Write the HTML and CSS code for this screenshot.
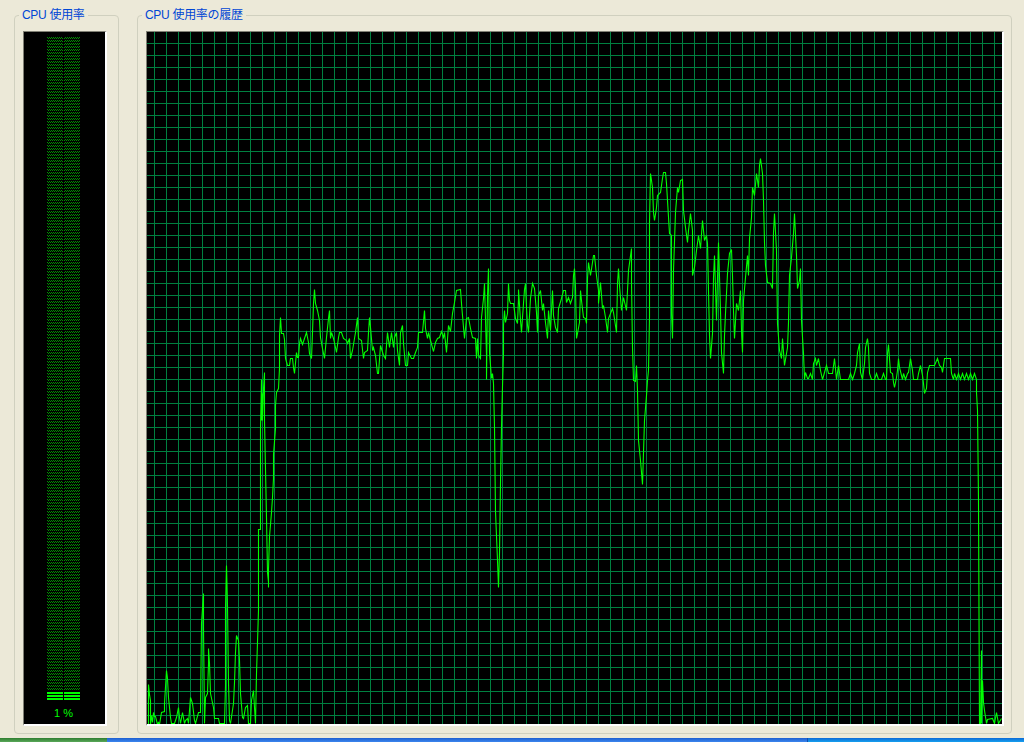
FILE: index.html
```html
<!DOCTYPE html>
<html lang="ja">
<head>
    <meta charset="UTF-8">
    <meta name="viewport" content="width=device-width, initial-scale=1.0">
    <title>Windows タスク マネージャ</title>
    <link rel="stylesheet" href="styles.css">
</head>
<body>
    <div class="panels">
        <!-- CPU 使用率 -->
        <fieldset class="group group-usage">
            <legend class="group-title">CPU 使用率</legend>
            <div class="screen meter">
                <svg class="meter-bars" width="33" height="664" viewBox="0 0 33 664">
                    <defs>
                        <pattern id="dim-dots" width="2" height="3" patternUnits="userSpaceOnUse">
                            <rect x="0" y="0" width="1" height="1" class="dim-dot"></rect>
                            <rect x="1" y="1" width="1" height="1" class="dim-dot"></rect>
                        </pattern>
                        <pattern id="lit-rows" y="1" width="33" height="3" patternUnits="userSpaceOnUse">
                            <rect x="0" y="0" width="33" height="2" class="lit-row"></rect>
                        </pattern>
                    </defs>
                    <rect x="0" y="0" width="16" height="654" fill="url(#dim-dots)"></rect>
                    <rect x="17" y="0" width="16" height="654" fill="url(#dim-dots)"></rect>
                    <rect x="0" y="655" width="16" height="8" fill="url(#lit-rows)"></rect>
                    <rect x="17" y="655" width="16" height="8" fill="url(#lit-rows)"></rect>
                </svg>
                <div class="meter-value">1 %</div>
            </div>
        </fieldset>

        <!-- CPU 使用率の履歴 -->
        <fieldset class="group group-history">
            <legend class="group-title">CPU 使用率の履歴</legend>
            <div class="screen graph">
                <svg class="graph-line" width="855" height="692" viewBox="146.5 31.5 855 692">
                    <polyline points="148,724 148,684 149,694 150,700 150,724 151,715 152,722 153,712 154,716 155,716 156,720 157,724 158,722 159,724 160,718 161,712 164,711 164,703 166,670 167,678 168,697 169,707 170,717 171,723 174,723 176,717 178,707 179,717 180,723 182,712 184,723 185,720 187,718 188,723 190,697 192,703 194,720 195,723 198,712 200,712 201,623 203,593 203,627 204,723 205,697 207,693 208,663 208,648 209,663 210,693 213,707 214,718 218,718 219,723 224,723 225,685 225,607 226,565 227,605 228,682 229,720 230,723 233,703 234,682 235,652 236,635 238,640 239,660 240,693 242,717 243,718 245,707 247,705 248,723 250,723 251,700 253,690 254,707 255,723 256,673 258,610 258,529 260,529 260,428 261,379 261,420 262,393 262,420 263,388 264,372 264,420 266,517 267,572 268,582 268,587 268,569 269,536 271,512 272,497 273,478 273,454 275,428 275,405 276,392 278,388 279,368 279,335 280,317 281,333 283,333 284,339 285,358 287,365 289,365 290,358 292,358 293,367 294,373 296,352 297,357 298,357 299,343 300,338 302,344 304,338 306,332 308,342 309,353 311,358 312,332 313,303 314,289 315,303 317,310 319,320 320,337 322,348 324,358 326,337 328,318 329,310 330,338 331,332 333,338 335,347 336,352 338,337 339,332 341,332 343,338 346,340 347,343 349,338 350,358 352,350 354,338 355,332 357,317 358,338 361,340 363,358 364,352 367,350 368,332 369,317 370,327 372,350 373,347 375,355 377,373 378,373 380,345 383,355 385,358 387,332 389,347 391,332 393,347 394,337 396,332 397,350 399,365 400,332 402,325 403,343 405,365 407,365 408,352 411,358 413,358 415,352 417,347 418,332 422,332 424,310 425,328 427,338 428,332 430,340 433,351 435,342 437,338 439,337 441,331 443,337 444,332 446,352 448,325 450,331 452,313 454,302 456,290 460,289 461,303 463,327 464,338 466,318 468,317 470,328 472,337 475,338 476,358 477,338 478,355 480,358 481,317 483,298 484,283 486,355 486,379 487,295 488,268 489,352 491,378 492,373 493,383 494,427 495,511 497,560 498,587 499,552 500,483 501,427 502,386 503,352 503,325 504,310 505,322 507,313 508,283 509,300 510,303 513,303 515,318 517,323 518,298 518,289 520,320 521,332 522,317 523,303 524,289 525,283 526,307 527,325 528,332 530,298 532,283 534,288 536,312 537,332 538,295 540,290 542,310 543,303 545,322 547,338 548,310 550,330 552,290 553,315 555,327 557,332 558,308 561,298 563,290 565,290 566,302 568,297 570,303 572,297 573,275 574,268 575,287 576,338 577,333 579,322 580,290 581,300 583,317 585,318 586,323 587,278 588,262 590,275 592,262 593,255 594,255 596,275 598,290 598,303 600,282 602,308 603,305 605,317 607,332 608,318 612,308 613,312 616,332 617,283 618,268 619,285 621,310 623,297 626,310 628,270 631,248 631,282 632,347 633,380 635,381 636,365 637,390 638,440 640,460 642,484 644,420 646,395 647,380 648,370 649,317 649,222 650,173 652,187 653,212 654,220 656,207 657,195 660,192 662,178 663,172 665,172 666,183 667,200 669,233 671,235 671,313 672,338 673,270 675,212 677,187 678,192 680,180 682,179 683,210 685,227 687,242 688,230 690,213 692,230 692,275 694,267 696,250 698,235 700,248 702,220 704,240 706,235 707,243 708,290 709,335 710,358 712,333 713,277 714,255 716,320 717,277 718,242 720,310 721,352 723,373 724,335 725,313 727,273 729,253 731,249 732,275 733,310 734,338 736,303 738,310 740,290 741,330 742,352 743,300 745,277 747,255 748,275 749,238 751,217 752,187 754,195 756,173 758,187 759,165 760,158 762,173 763,200 764,242 765,265 767,282 770,283 772,288 773,232 774,213 776,250 777,323 779,350 781,358 782,338 784,365 787,347 788,322 789,275 791,257 793,233 794,213 796,255 797,288 799,280 800,268 801,320 803,353 804,379 805,372 807,378 808,378 810,373 812,379 813,363 815,358 816,365 818,358 820,370 822,379 824,372 826,365 828,373 832,373 834,358 836,379 838,365 840,379 848,379 850,373 852,379 854,373 856,365 857,352 859,343 860,372 862,379 864,363 865,347 867,338 868,347 869,373 871,379 874,379 876,373 878,379 881,379 883,373 885,379 886,379 887,353 888,344 890,372 892,373 893,382 894,387 896,377 897,370 898,358 899,367 902,379 903,373 905,379 907,373 908,372 910,358 912,370 913,379 917,379 918,373 920,365 922,375 923,383 924,393 926,388 927,372 929,365 934,365 937,358 939,365 941,367 942,372 944,358 950,358 951,373 953,379 954,373 956,379 958,373 960,379 962,373 964,379 966,373 968,379 970,373 972,379 974,373 976,379 976,392 977,410 978,500 979,724 980,724 981,650 981,723 982,680 983,702 984,710 986,723 987,719 992,718 994,723 996,712 998,723 1001,718"></polyline>
                </svg>
            </div>
        </fieldset>
    </div>

    <div class="taskbar">
        <div class="start-button"></div>
        <div class="task-band"></div>
        <div class="tray"></div>
    </div>
</body>
</html>
```

FILE: styles.css
```css
/* ページ全体 */
body, html {
    margin: 0;
    padding: 0;
    height: 100%;
    overflow: hidden;
    background-color: #ece9d8;
    font-family: "Liberation Sans", "Noto Sans CJK JP", sans-serif;
}

.panels {
    box-sizing: border-box;
    height: 738px;
    padding: 8px 12px 4px 14px;
    display: flex;
    gap: 18px;
}

/* グループボックス */
.group {
    box-sizing: border-box;
    min-width: 0;
    margin: 0;
    padding: 9px 7px 7px 8px;
    border: 1px solid #d0d0bf;
    border-radius: 4px;
    display: flex;
    flex-direction: column;
}

.group-usage {
    width: 105px;
    padding-right: 11px;
}

.group-history {
    flex: 1;
}

.group-title {
    margin-left: -4px;
    padding: 0 3px;
    font-size: 12px;
    line-height: 14px;
    letter-spacing: -0.3px;
    color: #0046d5;
}

/* 黒い表示領域 */
.screen {
    flex: 1;
    position: relative;
    background-color: #000;
    border-style: solid;
    border-width: 1px 2px 2px 1px;
    border-color: #808074 #fff #fff #808074;
}

/* メーター */
.meter {
    display: flex;
    flex-direction: column;
    align-items: center;
    padding-top: 5px;
}

.meter-bars {
    display: block;
    margin-left: -2px;
    shape-rendering: crispEdges;
}

.dim-dot {
    fill: #009000;
}

.lit-row {
    fill: #00ff00;
}

.meter-value {
    margin-top: 6px;
    margin-left: -2px;
    font-size: 11px;
    line-height: 13px;
    color: #00ff00;
}

/* 履歴グラフ */
.graph {
    background-image:
        linear-gradient(#008040 1px, transparent 1px),
        linear-gradient(90deg, #008040 1px, transparent 1px);
    background-size: 12px 12px;
    background-position: 7px 11px;
    background-origin: padding-box;
}

.graph-line {
    display: block;
}

.graph-line polyline {
    fill: none;
    stroke: #00ff00;
    stroke-width: 1.1;
}

/* タスクバー */
.taskbar {
    height: 4px;
    display: flex;
}

.start-button {
    width: 107px;
    background: linear-gradient(to bottom, #2f7d2f, #5aa85a);
}

.task-band {
    width: 700px;
    background: linear-gradient(to bottom, #1d5fd0, #3c86ee);
}

.tray {
    flex: 1;
    background: linear-gradient(to bottom, #0c6ad6, #16a0ee);
    border-left: 1px solid #0f4fb0;
}
```
